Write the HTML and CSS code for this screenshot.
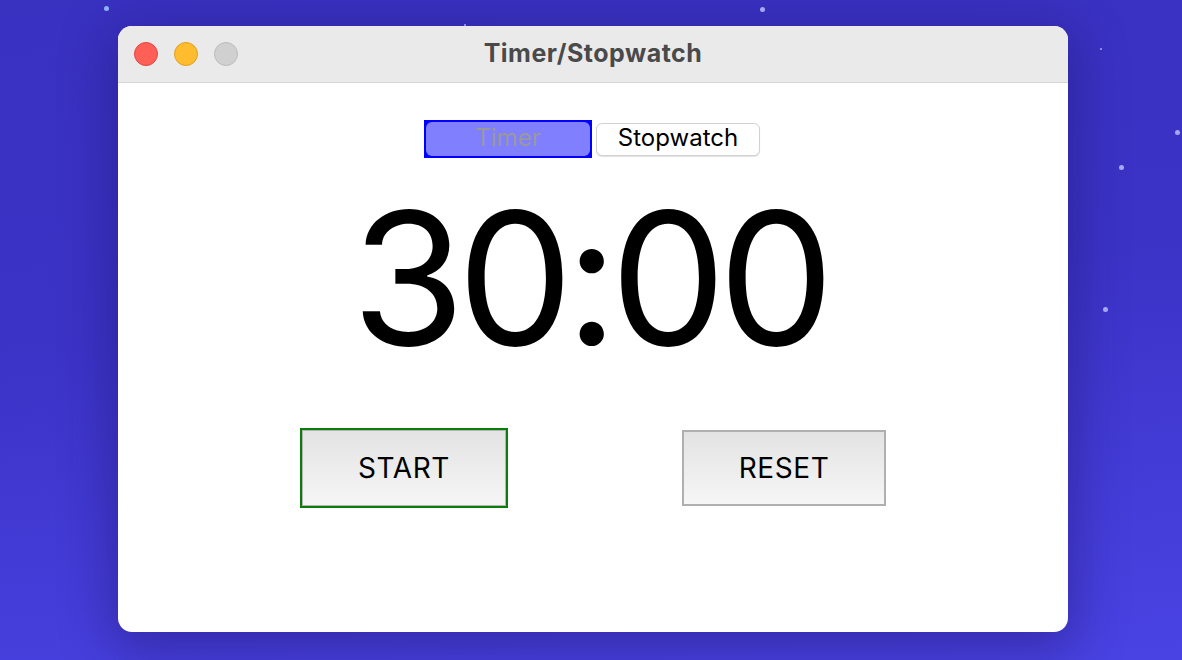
FILE: index.html
```html
<!DOCTYPE html>
<html>
<head>
<meta charset="utf-8">
<link rel="stylesheet" href="styles.css">
</head>
<body>
<span class="star s1"></span>
<span class="star s2"></span>
<span class="star s3"></span>
<span class="star s4"></span>
<span class="star s5"></span>
<span class="star s6"></span>
<span class="star s7"></span>
<div class="window">
  <div class="titlebar">
    <div class="lights">
      <span class="light red"></span>
      <span class="light yellow"></span>
      <span class="light gray"></span>
    </div>
    <div class="title">Timer/Stopwatch</div>
    <div></div>
  </div>
  <div class="content">
    <div class="segments">
      <div class="seg seg-active"><span class="seg-inner">Timer</span></div>
      <div class="seg seg-plain">Stopwatch</div>
    </div>
    <div class="clock">30:00</div>
    <div class="actions">
      <button class="btn btn-start">START</button>
      <button class="btn btn-reset">RESET</button>
    </div>
  </div>
</div>
</body>
</html>
```
FILE: styles.css
```css
html, body {
  margin: 0;
  padding: 0;
}
body {
  width: 1182px;
  height: 660px;
  overflow: hidden;
  position: relative;
  background: linear-gradient(175deg, #3931c0 0%, #3b33c6 45%, #4a43e4 100%);
  font-family: Inter, "Liberation Sans", sans-serif;
  display: flex;
  align-items: flex-start;
}
.star {
  position: absolute;
  width: 5px;
  height: 5px;
  border-radius: 50%;
  background: #a9a6f0;
}
.s1 { left: 104px; top: 6px; background: #8fb0f5; }
.s2 { left: 464px; top: 24px; width: 2px; height: 2px; }
.s3 { left: 760px; top: 7px; }
.s4 { left: 1100px; top: 48px; width: 2px; height: 2px; }
.s5 { left: 1175px; top: 130px; }
.s6 { left: 1119px; top: 165px; }
.s7 { left: 1103px; top: 307px; }

.window {
  margin: 26px 0 0 118px;
  width: 950px;
  height: 606px;
  border-radius: 14px;
  overflow: hidden;
  background: #ffffff;
  box-shadow: 0 12px 50px 8px rgba(30, 22, 110, 0.45);
  display: flex;
  flex-direction: column;
}
.titlebar {
  height: 56px;
  flex: none;
  background: #eaeaea;
  border-bottom: 1px solid #d7d7d7;
  display: grid;
  grid-template-columns: 1fr auto 1fr;
  align-items: center;
}
.lights {
  display: flex;
  gap: 16px;
  padding-left: 16px;
}
.light {
  width: 22px;
  height: 22px;
  border-radius: 50%;
  border: 1px solid;
}
.red { background: #fe5f57; border-color: #e2463f; }
.yellow { background: #febc2e; border-color: #e0a020; }
.gray { background: #d0d0d0; border-color: #bcbcbc; }
.title {
  font-weight: 700;
  font-size: 25px;
  letter-spacing: 0.5px;
  color: #4a4a4a;
  line-height: 1;
  padding-bottom: 2px;
}

.content {
  display: flex;
  flex-direction: column;
  align-items: center;
  padding-top: 37px;
}
.segments {
  display: flex;
  align-items: center;
  gap: 4px;
  height: 38px;
  margin-right: 2px;
}
.seg {
  box-sizing: border-box;
  font-size: 24px;
  display: flex;
  align-items: center;
  justify-content: center;
}
.seg-active {
  width: 168px;
  height: 38px;
  border: 2px solid #0000ff;
  background: #0000ff;
}
.seg-inner {
  flex: 1;
  align-self: stretch;
  display: flex;
  align-items: center;
  justify-content: center;
  background: #8080ff;
  border-radius: 6px;
  color: #999999;
  padding-bottom: 3px;
}
.seg-plain {
  width: 164px;
  height: 33px;
  background: #ffffff;
  border: 1px solid #d2d2d2;
  border-radius: 6px;
  box-shadow: 0 1px 1px rgba(0, 0, 0, 0.12);
  color: #000000;
  padding-bottom: 3px;
}
.clock {
  margin-top: 28px;
  font-size: 184px;
  line-height: 184px;
  height: 184px;
  color: #000000;
  letter-spacing: -8px;
  padding-right: 8px;
}
.actions {
  margin-top: 58px;
  display: flex;
  align-items: center;
  gap: 174px;
}
.btn {
  box-sizing: border-box;
  font-family: Inter, "Liberation Sans", sans-serif;
  font-size: 28px;
  letter-spacing: 0.6px;
  color: #000000;
  background: linear-gradient(180deg, #e3e3e3 0%, #f6f6f6 100%);
  padding: 0;
}
.btn-start {
  width: 208px;
  height: 80px;
  border: 2px solid #0b7d0b;
  box-shadow: inset 0 0 0 1px #b4b4b4;
}
.btn-reset {
  width: 204px;
  height: 76px;
  border: 2px solid #b0b0b0;
}
```
